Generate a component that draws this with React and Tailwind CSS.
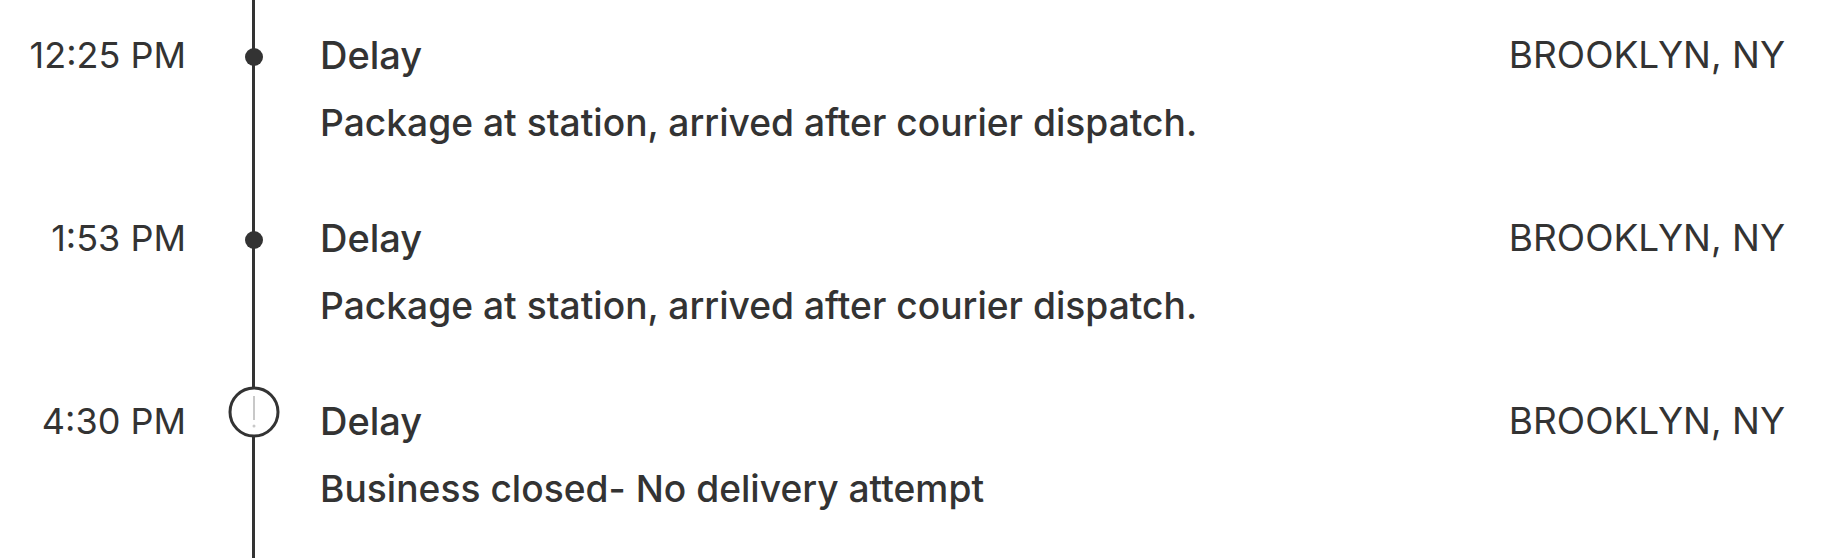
import React from "react";

const rows = [
  { time: "12:25 PM", title: "Delay", desc: "Package at station, arrived after courier dispatch.", loc: "BROOKLYN, NY", kind: "dot" },
  { time: "1:53 PM", title: "Delay", desc: "Package at station, arrived after courier dispatch.", loc: "BROOKLYN, NY", kind: "dot" },
  { time: "4:30 PM", title: "Delay", desc: "Business closed- No delivery attempt", loc: "BROOKLYN, NY", kind: "alert" },
];

function Marker({ kind }) {
  if (kind === "dot") {
    return <div className="absolute left-[59px] top-[48px] h-[18px] w-[18px] rounded-full bg-[#333333]" />;
  }
  return (
    <svg className="absolute left-[42px] top-[20px]" width="52" height="52" viewBox="0 0 52 52">
      <circle cx="26" cy="26" r="24" fill="#ffffff" stroke="#333333" strokeWidth="3" />
      <line x1="26" y1="10" x2="26" y2="34" stroke="#c8c8c8" strokeWidth="2" />
      <circle cx="26" cy="40" r="1.5" fill="#c8c8c8" />
    </svg>
  );
}

function Row({ r, last }) {
  return (
    <div className={`flex ${last ? "flex-1" : "h-[183px]"}`}>
      <div className="w-[186px] shrink-0 pt-[37px] text-right text-[36px] leading-[36px]">{r.time}</div>
      <div className="relative w-[134px] shrink-0">
        <div className="absolute left-[66px] top-0 h-full w-[3px] bg-[#333333]" />
        <Marker kind={r.kind} />
      </div>
      <div className="flex-1 pt-[36px] font-[550]">
        <div className="text-[38px] leading-[38px]">{r.title}</div>
        <div className="mt-[30px] text-[37.2px] leading-[37.5px]">{r.desc}</div>
      </div>
      <div className="pr-[45px] pt-[36px] text-[37px] leading-[37px]">{r.loc}</div>
    </div>
  );
}

export default function App() {
  return (
    <div className="flex h-[558px] w-[1830px] flex-col overflow-hidden bg-white font-['Inter',sans-serif] text-[#333333]">
      {rows.map((r, i) => (
        <Row key={i} r={r} last={i === rows.length - 1} />
      ))}
    </div>
  );
}
